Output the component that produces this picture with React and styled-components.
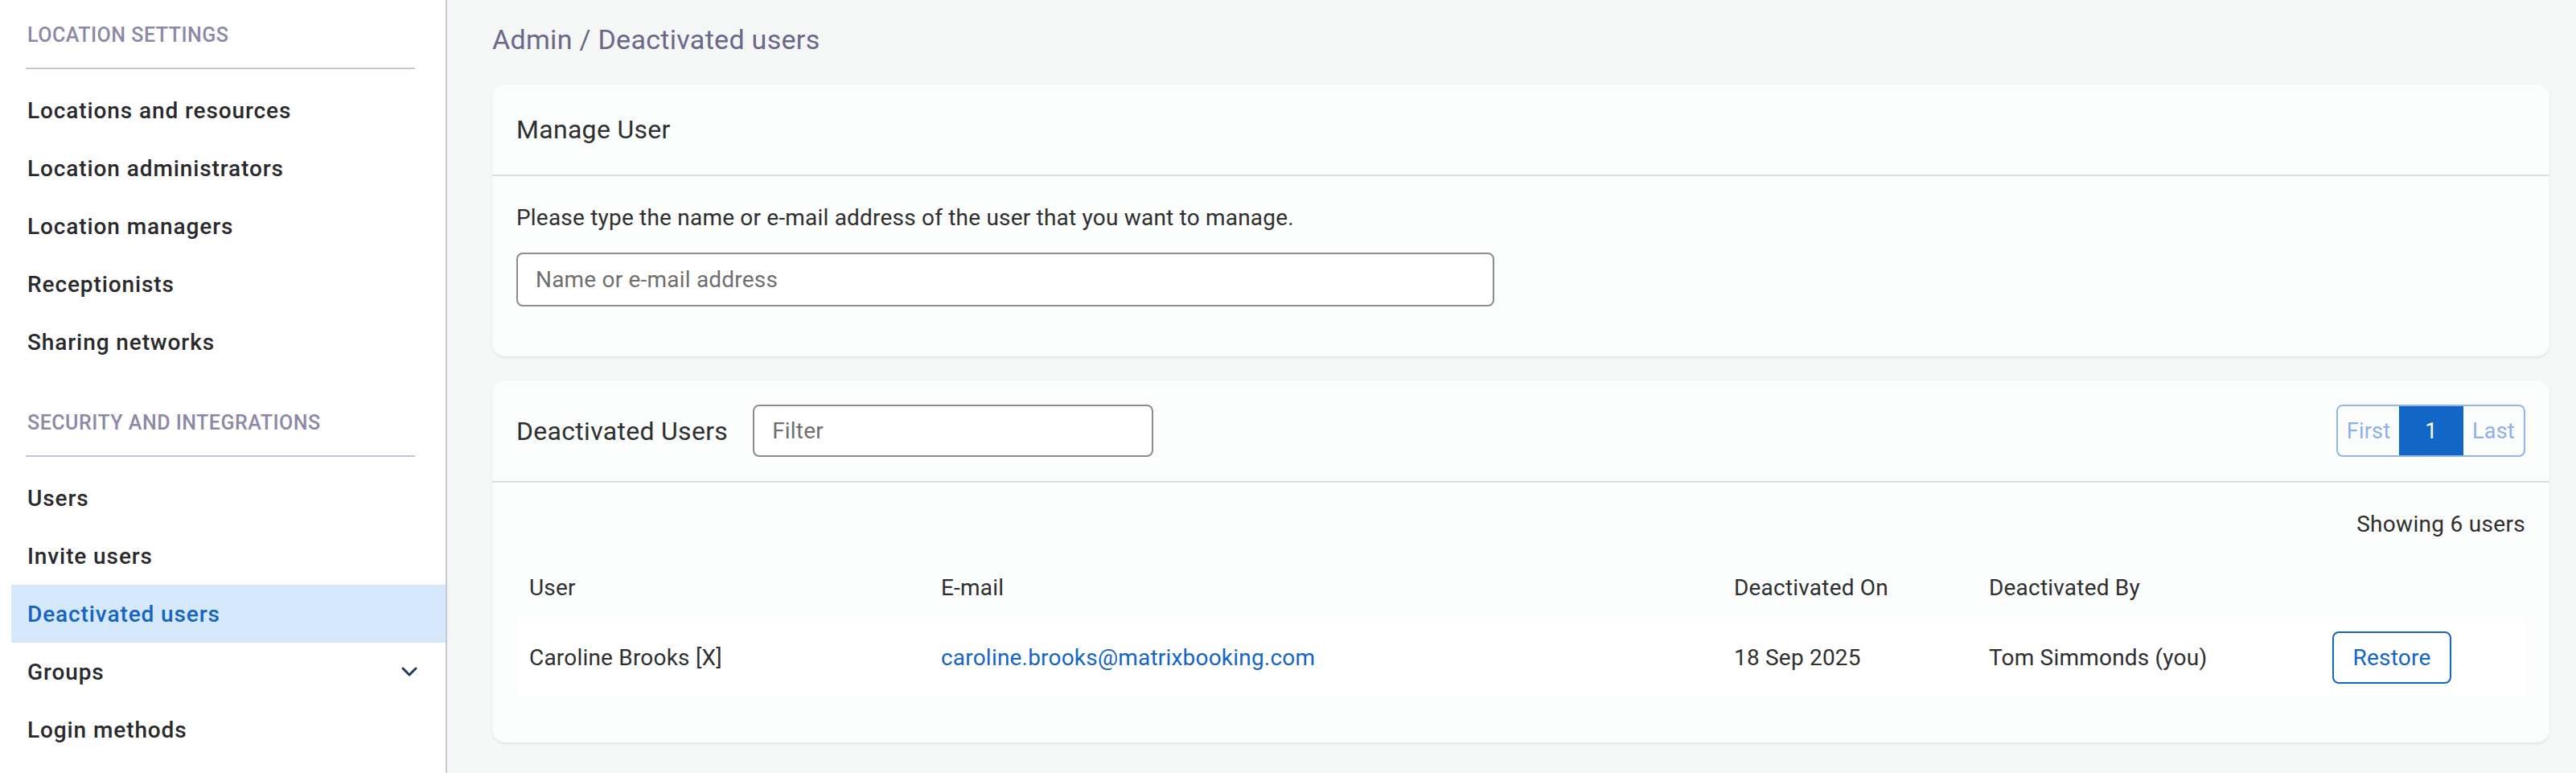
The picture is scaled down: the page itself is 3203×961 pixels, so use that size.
import React from "react";
import styled, { createGlobalStyle, css } from "styled-components";

const GlobalStyle = createGlobalStyle`
  html, body { margin: 0; padding: 0; }
  body {
    background: #f5f6f6;
    font-family: Roboto, "Liberation Sans", Arial, sans-serif;
    -webkit-font-smoothing: antialiased;
  }
  * { box-sizing: border-box; }
`;

const Layout = styled.div`
  display: flex;
  min-height: 100vh;
  width: 3203px;
`;

const Sidebar = styled.aside`
  width: 556px;
  flex: none;
  background: #ffffff;
  border-right: 2px solid #c8c8d8;
  padding: 29px 0 0 14px;
  min-height: 100vh;
`;

const NavSection = styled.section`
  & + & { margin-top: 50px; }
`;

const SectionTitle = styled.div`
  padding-left: 20px;
  font-size: 25px;
  line-height: 30px;
  font-weight: 500;
  letter-spacing: 0.5px;
  text-transform: uppercase;
  color: #8c89a6;
`;

const SectionRule = styled.div`
  height: 2px;
  background: #c4c5d5;
  margin: 25px 38px 15px 18px;
`;

const NavItem = styled.a`
  height: 72px;
  display: flex;
  align-items: center;
  justify-content: space-between;
  padding: 0 35px 0 20px;
  font-size: 28px;
  font-weight: 500;
  letter-spacing: 0.9px;
  color: #2a2a2e;
  text-decoration: none;
  ${(p) =>
    p.$active &&
    css`
      background: #d5e8fc;
      color: #1563c2;
    `}
`;

const Main = styled.main`
  flex: 1;
  padding: 29px 34px 0 56px;
`;

const Breadcrumb = styled.div`
  font-size: 34px;
  line-height: 40px;
  letter-spacing: 0.3px;
  color: #6b6787;
  margin-bottom: 36px;
`;

const Card = styled.section`
  background: #fbfcfc;
  border-radius: 16px;
  box-shadow: 0 2px 3px rgba(0, 0, 0, 0.07);
  & + & { margin-top: 30px; }
`;

const CardHeader = styled.header`
  height: ${(p) => p.$height}px;
  display: flex;
  align-items: center;
  gap: 31px;
  padding: 0 30px;
  border-bottom: 2px solid #dcdfdf;
`;

const CardTitle = styled.h2`
  margin: 0;
  font-size: 32px;
  line-height: 40px;
  font-weight: 400;
  letter-spacing: 0.3px;
  color: #2f2f2f;
`;

const CardBody = styled.div`
  padding: 32px 30px ${(p) => p.$bottom}px;
`;

const HelpText = styled.p`
  margin: 0 0 23px;
  font-size: 28px;
  line-height: 40px;
  letter-spacing: 0.2px;
  color: #2f2f2f;
`;

const TextInput = styled.input`
  display: block;
  width: ${(p) => p.$width}px;
  height: ${(p) => p.$height}px;
  border: 2px solid #8c8c8c;
  border-radius: 8px;
  padding: 0 22px;
  font-family: inherit;
  font-size: 28px;
  letter-spacing: 0.2px;
  color: #2f2f2f;
  background: #ffffff;
  outline: none;
  &::placeholder { color: #6f6f6f; }
`;

const Pager = styled.div`
  margin-left: auto;
  display: flex;
  height: 65px;
  border: 2px solid #94b5e8;
  border-radius: 8px;
  overflow: hidden;
`;

const PageCell = styled.span`
  width: ${(p) => p.$w}px;
  display: flex;
  align-items: center;
  justify-content: center;
  font-size: 27px;
  letter-spacing: 0.2px;
  color: #8fb0e6;
  ${(p) =>
    p.$active &&
    css`
      background: #1166c6;
      color: #ffffff;
    `}
`;

const Showing = styled.div`
  text-align: right;
  font-size: 28px;
  line-height: 40px;
  letter-spacing: 0.3px;
  color: #2f2f2f;
  margin-bottom: 20px;
`;

const Table = styled.table`
  width: 100%;
  border-collapse: collapse;
  table-layout: fixed;
  font-size: 28px;
  letter-spacing: 0.2px;
  color: #2f2f2f;
`;

const HeadCell = styled.th`
  height: 77px;
  padding: 0 16px;
  text-align: left;
  font-weight: 400;
`;

const Row = styled.tr`
  background: #ffffff;
`;

const Cell = styled.td`
  height: 96px;
  padding: 0 16px;
  vertical-align: middle;
`;

const EmailLink = styled.a`
  color: #1565c6;
  text-decoration: none;
`;

const RestoreButton = styled.button`
  width: 148px;
  height: 65px;
  border: 2px solid #1366c4;
  border-radius: 8px;
  background: #ffffff;
  color: #1366c4;
  font-family: inherit;
  font-size: 28px;
  letter-spacing: 0.2px;
  padding: 0;
`;

const Chevron = () => (
  <svg width="20" height="12" viewBox="0 0 20 12" fill="none">
    <path d="M2 2 L10 10 L18 2" stroke="#1f3a5f" strokeWidth="3" strokeLinecap="round" strokeLinejoin="round" />
  </svg>
);

const sections = [
  {
    title: "Location settings",
    items: [
      { label: "Locations and resources" },
      { label: "Location administrators" },
      { label: "Location managers" },
      { label: "Receptionists" },
      { label: "Sharing networks" },
    ],
  },
  {
    title: "Security and integrations",
    items: [
      { label: "Users" },
      { label: "Invite users" },
      { label: "Deactivated users", active: true },
      { label: "Groups", expandable: true },
      { label: "Login methods" },
    ],
  },
];

const columns = [
  { label: "User", width: 512 },
  { label: "E-mail", width: 986 },
  { label: "Deactivated On", width: 317 },
  { label: "Deactivated By", width: 427 },
  { label: "", width: 256 },
];

export default function App() {
  return (
    <>
      <GlobalStyle />
      <Layout>
        <Sidebar>
          {sections.map((s) => (
            <NavSection key={s.title}>
              <SectionTitle>{s.title}</SectionTitle>
              <SectionRule />
              {s.items.map((it) => (
                <NavItem key={it.label} $active={it.active}>
                  <span>{it.label}</span>
                  {it.expandable && <Chevron />}
                </NavItem>
              ))}
            </NavSection>
          ))}
        </Sidebar>
        <Main>
          <Breadcrumb>Admin / Deactivated users</Breadcrumb>
          <Card>
            <CardHeader $height={114}>
              <CardTitle>Manage User</CardTitle>
            </CardHeader>
            <CardBody $bottom={62}>
              <HelpText>Please type the name or e-mail address of the user that you want to manage.</HelpText>
              <TextInput $width={1216} $height={67} placeholder="Name or e-mail address" />
            </CardBody>
          </Card>
          <Card>
            <CardHeader $height={127}>
              <CardTitle>Deactivated Users</CardTitle>
              <TextInput $width={498} $height={65} placeholder="Filter" />
              <Pager>
                <PageCell $w={76}>First</PageCell>
                <PageCell $w={80} $active>1</PageCell>
                <PageCell $w={75}>Last</PageCell>
              </Pager>
            </CardHeader>
            <CardBody $bottom={58}>
              <Showing>Showing 6 users</Showing>
              <Table>
                <colgroup>
                  {columns.map((c, i) => (
                    <col key={i} style={{ width: c.width }} />
                  ))}
                </colgroup>
                <thead>
                  <tr>
                    {columns.map((c, i) => (
                      <HeadCell key={i}>{c.label}</HeadCell>
                    ))}
                  </tr>
                </thead>
                <tbody>
                  <Row>
                    <Cell>Caroline Brooks [X]</Cell>
                    <Cell>
                      <EmailLink href="#">caroline.brooks@matrixbooking.com</EmailLink>
                    </Cell>
                    <Cell>18 Sep 2025</Cell>
                    <Cell>Tom Simmonds (you)</Cell>
                    <Cell>
                      <RestoreButton>Restore</RestoreButton>
                    </Cell>
                  </Row>
                </tbody>
              </Table>
            </CardBody>
          </Card>
        </Main>
      </Layout>
    </>
  );
}
